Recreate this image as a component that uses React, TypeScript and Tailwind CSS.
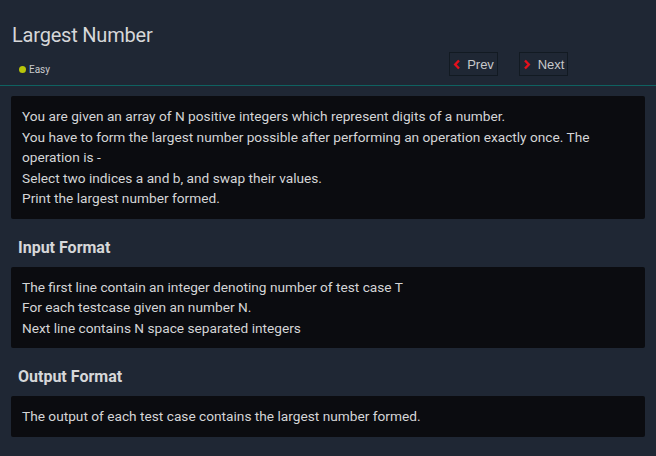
import React from 'react';

const statement = [
  'You are given an array of N positive integers which represent digits of a number.',
  'You have to form the largest number possible after performing an operation exactly once. The operation is -',
  'Select two indices a and b, and swap their values.',
  'Print the largest number formed.',
];

const inputFormat = [
  'The first line contain an integer denoting number of test case T',
  'For each testcase given an number N.',
  'Next line contains N space separated integers',
];

function Chevron({ dir }: { dir: 'left' | 'right' }) {
  return (
    <svg width="8" height="11" viewBox="0 0 8 11" className="shrink-0">
      <path
        d={dir === 'left' ? 'M6 1.5 L2.2 5.5 L6 9.5' : 'M2 1.5 L5.8 5.5 L2 9.5'}
        fill="none"
        stroke="#e5101c"
        strokeWidth="2.4"
      />
    </svg>
  );
}

function Block({ lines }: { lines: string[] }) {
  return (
    <div className="mx-[11px] rounded-[2px] bg-[#0b0c10] px-[11px] py-[10px] text-[13.7px] leading-[20.5px] text-[#d4d5d7]">
      {lines.map((l, i) => (
        <p key={i}>{l}</p>
      ))}
    </div>
  );
}

export default function App() {
  return (
    <div
      className="h-[456px] w-[656px] overflow-hidden bg-[#1f2734]"
      style={{ fontFamily: 'Roboto, "Noto Sans", sans-serif' }}
    >
      <div className="border-b border-[#0f6261] pb-[8px]">
        <h1 className="px-3 pt-[21px] text-[20px] leading-[28px] tracking-[-0.2px] text-[#d6d7d9]">Largest Number</h1>
        <div className="flex items-start justify-between">
          <div className="ml-[19px] mt-[13px] flex items-center gap-[3px]">
            <span className="h-[7px] w-[7px] rounded-full bg-[#b8c50a]" />
            <span className="text-[10px] text-[#c9cacc]">Easy</span>
          </div>
          <div
            className="mr-[88px] mt-[3px] flex gap-[21px] text-[13px] text-[#c8c9cb]"
            style={{ fontFamily: '"Liberation Sans", Arial, sans-serif' }}
          >
            <button className="flex h-[24px] w-[49px] items-center justify-center gap-[6px] border border-[#121a22]">
              <Chevron dir="left" />
              <span className="mt-[1px]">Prev</span>
            </button>
            <button className="flex h-[24px] w-[49px] items-center justify-center gap-[7px] border border-[#121a22]">
              <Chevron dir="right" />
              <span className="mt-[1px]">Next</span>
            </button>
          </div>
        </div>
      </div>

      <div className="pt-[10px]">
        <Block lines={statement} />
        <h2 className="mb-[8px] mt-[17px] px-[18px] text-[16px] font-bold leading-[23px] text-[#d6d7d9]">Input Format</h2>
        <Block lines={inputFormat} />
        <h2 className="mb-[8px] mt-[17px] px-[18px] text-[16px] font-bold leading-[23px] text-[#d6d7d9]">Output Format</h2>
        <Block lines={['The output of each test case contains the largest number formed.']} />
      </div>
    </div>
  );
}
